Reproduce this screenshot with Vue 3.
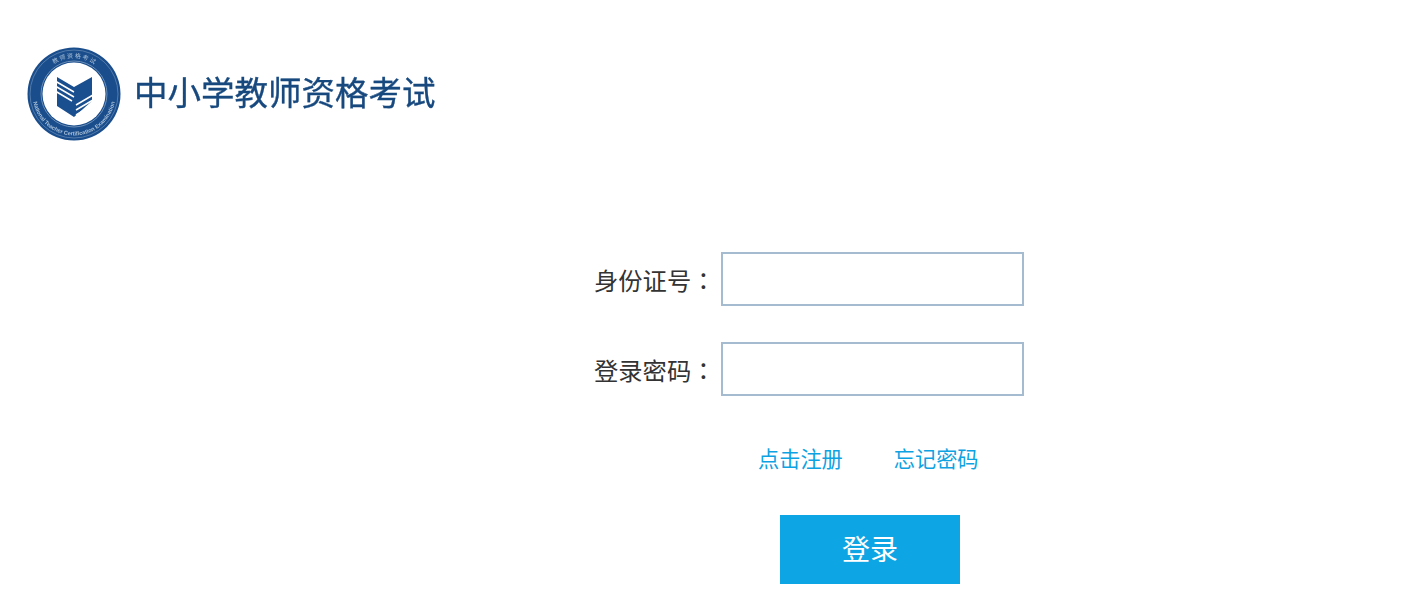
<template>
  <div class="page">
    <header class="logo">
      <svg class="emblem" width="94" height="94" viewBox="0 0 94 94">
        <defs>
          <path id="ringTop" d="M11 47a36 36 0 0 1 72 0" />
          <path id="ringBottom" d="M5.5 47a41.5 41.5 0 0 0 83 0" />
        </defs>
        <circle cx="47" cy="47" r="46.5" fill="#1a4d8c" />
        <circle cx="47" cy="47" r="44" fill="none" stroke="#5f86b3" stroke-width="0.8" />
        <circle cx="47" cy="47" r="33" fill="none" stroke="#6c90b8" stroke-width="1" />
        <circle cx="47" cy="47" r="31.5" fill="#fff" />
        <text class="ring-text ring-cn">
          <textPath href="#ringTop" startOffset="50%" text-anchor="middle">教 师 资 格 考 试</textPath>
        </text>
        <text class="ring-text ring-en">
          <textPath href="#ringBottom" startOffset="50%" text-anchor="middle">National Teacher Certification Examination</textPath>
        </text>
        <path d="M30 30 47 40 65 30V54L47 70 30 59Z" fill="#1a4f8f" />
        <g stroke="#fff" stroke-width="1.5" fill="none">
          <path d="M29 34.5 47 45M29 39.5 47 50M29 44.5 45 54" />
          <path d="M49 58 66 48M49 63 66 53M49 68 66 58" />
        </g>
      </svg>
      <span class="logo-text">中小学教师资格考试</span>
    </header>

    <form class="login-form" @submit.prevent>
      <div class="field">
        <label class="field-label">身份证号<span class="colon">：</span></label>
        <input class="field-input" type="text" />
      </div>
      <div class="field">
        <label class="field-label">登录密码<span class="colon">：</span></label>
        <input class="field-input" type="password" />
      </div>
      <div class="links">
        <a href="#">点击注册</a>
        <a href="#">忘记密码</a>
      </div>
      <button class="submit" type="submit">登录</button>
    </form>
  </div>
</template>

<script setup>
</script>

<style>
html,
body {
  margin: 0;
  background: #fff;
}
</style>

<style scoped>
.page {
  height: 606px;
  overflow: hidden;
  font-family: "Noto Sans CJK SC", "Liberation Sans", sans-serif;
}

.logo {
  display: flex;
  align-items: center;
  gap: 13px;
  padding: 47px 0 0 27px;
}

.emblem {
  display: block;
  flex-shrink: 0;
  filter: blur(0.4px);
}

.ring-text {
  fill: #a9c0d8;
}

.ring-cn {
  font-size: 6px;
}

.ring-en {
  font-size: 5.6px;
  font-family: "Liberation Sans", sans-serif;
  font-weight: 700;
}

.logo-text {
  font-size: 33.5px;
  line-height: 40px;
  color: #17497f;
  -webkit-text-stroke: 0.35px #17497f;
  white-space: nowrap;
  position: relative;
  top: -3px;
  filter: blur(0.4px);
}

.login-form {
  margin: 111px 0 0 594px;
  width: 430px;
}

.field {
  display: flex;
  align-items: center;
  height: 54px;
  margin-bottom: 36px;
}

.field-label {
  width: 127px;
  font-size: 24.3px;
  line-height: 54px;
  color: #333;
  white-space: nowrap;
  flex-shrink: 0;
  position: relative;
  top: 1px;
}

.colon {
  font-family: "Noto Sans CJK TC", sans-serif;
}

.field-input {
  width: 303px;
  height: 54px;
  box-sizing: border-box;
  border: 2px solid #a5bbd0;
  background: #fff;
  padding: 0 8px;
  outline: none;
}

.links {
  display: flex;
  gap: 51px;
  margin: 44px 0 0 164px;
  height: 38px;
  line-height: 36px;
}

.links a {
  font-size: 21.2px;
  color: #0da2e2;
  text-decoration: none;
  white-space: nowrap;
}

.submit {
  display: block;
  width: 180px;
  height: 69px;
  margin: 37px 0 0 186px;
  border: 0;
  padding: 0 0 3px;
  background: #0ea5e4;
  color: #fff;
  font-family: inherit;
  font-size: 28px;
}
</style>
